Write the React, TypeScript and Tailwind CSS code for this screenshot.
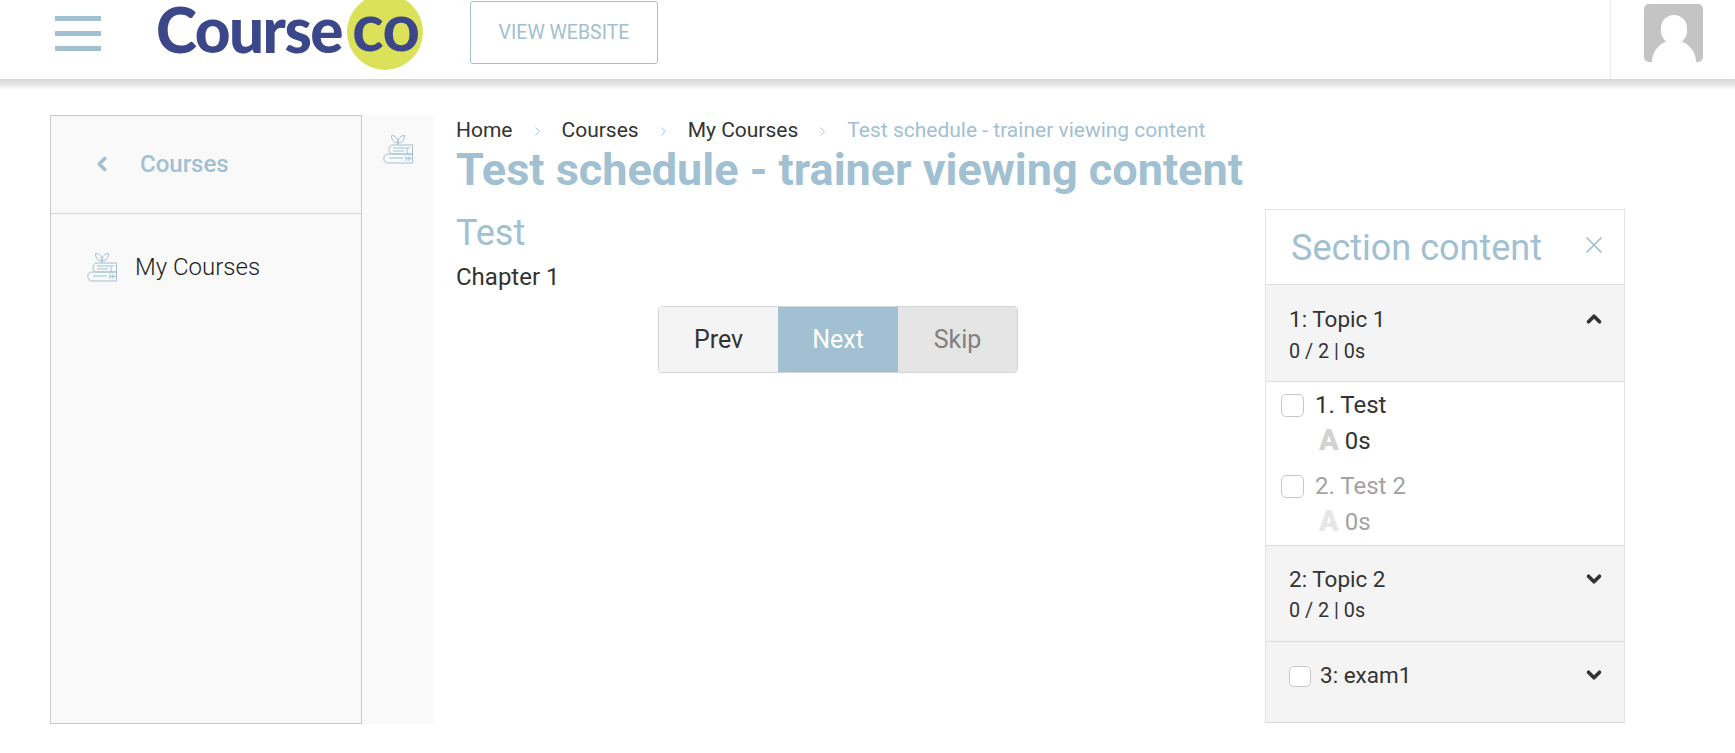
import { ChevronLeft, ChevronUp, ChevronDown, ChevronRight, X } from 'lucide-react';

const font = { fontFamily: 'Roboto, sans-serif' };

function BooksIcon({ className }: { className?: string }) {
  return (
    <svg viewBox="0 0 30 30" fill="none" stroke="#a1c0d1" strokeWidth="1" className={className}>
      <path d="M15 11V8M15 9C10.500 9 8.500 5.500 8.500 1.500 12.500 1.500 15 4.500 15 9zM15 9c4.500 0 6.500-3.500 6.500-7.500C17.500 1.500 15 4.500 15 9z" />
      <path d="M29.500 11H10C7.500 11 6 12.800 6 15.500S7.500 20 10 20h19.500z" />
      <path d="M29.500 20H5C2.500 20 .8 21.800.8 24.500S2.500 29 5 29h24.500z" />
      <path d="M10 14h17M10 17h11M24 15v5M6 24h14M23 22v5M26 22v5M23 24.500h6" />
    </svg>
  );
}

function Topic({ title, open, box, gap }: { title: string; open?: boolean; box: string; gap: string }) {
  return (
    <div className={`${box} bg-[#f4f4f4] border-b border-[#dcdcdc] pl-[23px] pr-[19px]`}>
      <div className="flex items-center justify-between h-[32px]">
        <span className="text-[22.500px] leading-[32px] text-[#333]">{title}</span>
        {open ? (
          <ChevronUp size={22} strokeWidth={4} className="text-[#333]" />
        ) : (
          <ChevronDown size={22} strokeWidth={4} className="text-[#333]" />
        )}
      </div>
      <div className={`${gap} text-[19.800px] leading-[26px] text-[#333]`}>0 / 2 | 0s</div>
    </div>
  );
}

function Lesson({ title, muted }: { title: string; muted?: boolean }) {
  return (
    <div className={muted ? 'text-[#a3a3a3]' : 'text-[#333]'}>
      <div className="flex items-center h-[36px]">
        <span className="w-[23px] h-[23px] rounded-[5px] border border-[#c8c8c8] bg-white" />
        <span className="ml-[11px] text-[24px]">{title}</span>
      </div>
      <div className="flex items-center h-[35px] ml-[38px]">
        <span className={`text-[29px] font-black leading-none ${muted ? 'text-[#e6e6e6]' : 'text-[#d2d2d2]'}`}>A</span>
        <span className="ml-[6px] text-[24px]">0s</span>
      </div>
    </div>
  );
}

function Crumb() {
  return <ChevronRight size={15} strokeWidth={1.500} className="mx-[17px] text-[#a1c0d1]" />;
}

export default function App() {
  return (
    <div style={font} className="min-h-[753px] bg-white overflow-hidden">
      <header className="h-[79px] flex items-stretch bg-white">
        <div className="w-[55px]" />
        <div className="w-[46px] flex flex-col pt-[16px] gap-[10px]">
          <span className="h-[5px] bg-[#a1c0d1]" />
          <span className="h-[5px] bg-[#a1c0d1]" />
          <span className="h-[5px] bg-[#a1c0d1]" />
        </div>
        <div className="relative w-[266px] ml-[56px] h-[79px]">
          <span
            style={{ fontFamily: 'Lato, sans-serif' }}
            className="absolute left-[-1px] top-0 text-[62px] leading-[58px] font-black tracking-[-1.500px] text-[#3b4789]"
          >
            Course
          </span>
          <span className="absolute left-[190px] top-[-6px] w-[76px] h-[76px] rounded-full bg-[#dbe159]" />
          <span
            style={{ fontFamily: 'Lato, sans-serif' }}
            className="absolute left-[195px] top-0 text-[66px] leading-[52px] font-bold tracking-[-1px] text-[#3b4789]"
          >
            co
          </span>
        </div>
        <div className="ml-[47px] mt-[1px] w-[188px] h-[63px] rounded-[3px] border border-[#a1c0d1] flex items-center justify-center text-[#a1c0d1] text-[19.500px]">
          VIEW WEBSITE
        </div>
        <div className="ml-auto w-[125px] border-l border-[#ececec] pl-[33px] pt-[4px]">
          <div className="relative w-[59px] h-[58px] rounded-[5px] bg-[#c4c4c4] overflow-hidden">
            <span className="absolute left-[17px] top-[11px] w-[26px] h-[29px] rounded-full bg-white" />
            <span className="absolute left-[8px] top-[36px] w-[44px] h-[40px] rounded-t-[22px] bg-white" />
          </div>
        </div>
      </header>
      <div className="h-[11px] bg-gradient-to-b from-[#d6d6d6] via-[#e6e6e6] to-white" />

      <div className="flex pl-[50px] pt-[25px]">
        <aside className="w-[312px] h-[609px] bg-[#f9f9f9] border border-[#c8c8c8]">
          <div className="h-[98px] border-b border-[#d6d6d6] flex items-center pl-[40px] pb-[2px]">
            <ChevronLeft size={22} strokeWidth={4} className="text-[#a1c0d1]" />
            <span className="ml-[27px] text-[24px] font-medium text-[#a1c0d1]">Courses</span>
          </div>
          <div className="flex items-center pl-[36px] pt-[35px]">
            <BooksIcon className="w-[30px] h-[30px]" />
            <span className="ml-[18px] text-[24px] font-light text-[#1d1d1d]">My Courses</span>
          </div>
        </aside>
        <div className="w-[71px] h-[609px] bg-[#f9f9f9] flex justify-center pt-[19px]">
          <BooksIcon className="w-[30px] h-[30px]" />
        </div>

        <main className="ml-[23px] w-[1169px]">
          <nav className="flex items-center h-[28px] pt-[4px] text-[21px] text-[#333]">
            <span>Home</span>
            <Crumb />
            <span>Courses</span>
            <Crumb />
            <span>My Courses</span>
            <Crumb />
            <span className="text-[#a1c0d1]">Test schedule - trainer viewing content</span>
          </nav>
          <h1 className="mt-[1px] text-[45px] leading-[52px] font-bold text-[#a1c0d1]">Test schedule - trainer viewing content</h1>

          <div className="flex mt-[13px]">
            <section className="w-[764px] pt-[1px]">
              <h2 className="text-[36px] leading-[46px] text-[#a1c0d1]">Test</h2>
              <p className="text-[24px] leading-[32px] mt-[5px] text-[#333]">Chapter 1</p>
              <div className="flex justify-center mt-[13px]">
                <div className="flex h-[67px] rounded-[4px] overflow-hidden border border-[#d5d5d5] text-[25px]">
                  <span className="w-[119px] flex items-center justify-center bg-[#f4f4f4] text-[#333]">Prev</span>
                  <span className="w-[120px] flex items-center justify-center bg-[#a1c0d1] text-white">Next</span>
                  <span className="w-[119px] flex items-center justify-center bg-[#e5e5e5] text-[#808080]">Skip</span>
                </div>
              </div>
            </section>

            <section className="ml-[45px] w-[360px] h-[514px] border border-[#e4e4e4] border-b-[#d8d8d8]">
              <div className="h-[75px] flex items-center justify-between pl-[25px] pr-[16px] border-b border-[#dcdcdc]">
                <span className="text-[36px] text-[#a1c0d1] mt-[2px]">Section content</span>
                <X size={28} strokeWidth={1.500} className="text-[#a1c0d1] mb-[4px]" />
              </div>
              <Topic title="1: Topic 1" open box="h-[97px] pt-[18px]" gap="mt-[4px]" />
              <div className="h-[164px] pl-[15px] pt-[5px] border-b border-[#dcdcdc]">
                <Lesson title="1. Test" />
                <div className="h-[10px]" />
                <Lesson title="2. Test 2" muted />
              </div>
              <Topic title="2: Topic 2" box="h-[96px] pt-[17px]" gap="mt-[3px]" />
              <div className="h-[80px] bg-[#f4f4f4] pl-[23px] pr-[19px] pt-[18px] flex items-start justify-between">
                <div className="flex items-center h-[32px]">
                  <span className="w-[22px] h-[21px] rounded-[5px] border border-[#c8c8c8] bg-white" />
                  <span className="ml-[9px] text-[22.500px] text-[#333]">3: exam1</span>
                </div>
                <ChevronDown size={22} strokeWidth={4} className="text-[#333] mt-[4px]" />
              </div>
            </section>
          </div>
        </main>
      </div>
    </div>
  );
}
